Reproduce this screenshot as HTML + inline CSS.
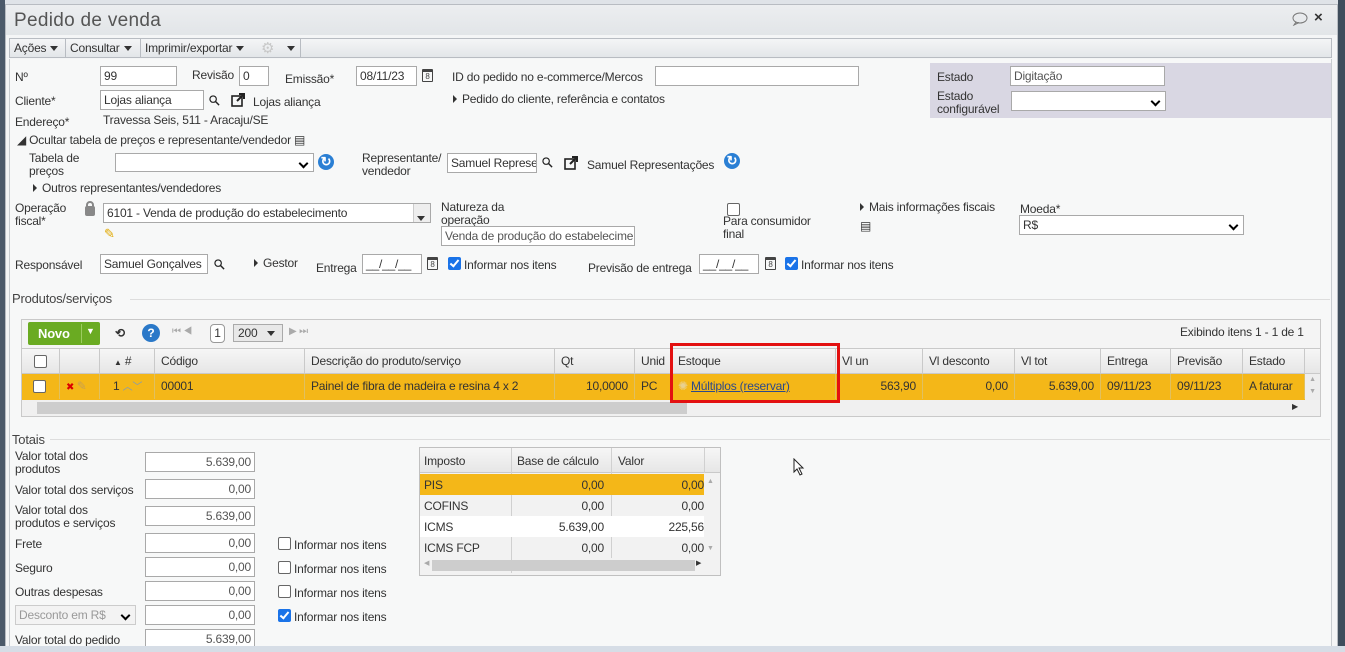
<!DOCTYPE html>
<html><head><meta charset="utf-8"><style>
*{box-sizing:border-box;margin:0;padding:0}
body{width:1345px;height:652px;overflow:hidden;background:#dfe3e8;font-family:"Liberation Sans",sans-serif;font-size:12px;color:#333;position:relative;letter-spacing:-0.2px}
.a{position:absolute;white-space:nowrap}
.in{position:absolute;background:#fff;border:1px solid #a9a9a9;height:20px;padding:2px 3px;font-size:12px;white-space:nowrap;overflow:hidden}
.r{text-align:right;color:#555}
.sel::after{content:"";position:absolute;right:6px;top:6px;width:5px;height:5px;border-right:2px solid #000;border-bottom:2px solid #000;transform:rotate(45deg)}
.cb{position:absolute;width:13px;height:13px;border:1px solid #666;border-radius:2px;background:#fff}
.cbk{position:absolute;width:13px;height:13px;border-radius:2px;background:#1a73e8}
.cbk::after{content:"";position:absolute;left:4px;top:1px;width:3px;height:7px;border-right:2px solid #fff;border-bottom:2px solid #fff;transform:rotate(40deg)}
.tri{display:inline-block;width:0;height:0;border-top:4px solid transparent;border-bottom:4px solid transparent;border-left:4px solid #333;margin-right:5px;vertical-align:0}
.dn{display:inline-block;width:0;height:0;border-left:4px solid transparent;border-right:4px solid transparent;border-top:5px solid #333;margin-left:4px;vertical-align:1px}
.th{position:absolute;top:0;height:25px;line-height:25px;padding-left:6px;border-right:1px solid #c9c9c9;color:#333}
.td{position:absolute;top:0;height:25px;line-height:25px;padding:0 6px;border-right:1px solid #e0c060}
.cal{position:absolute;width:11px;height:13px;border:1px solid #444;border-top-width:3px;border-radius:1px;font-size:8px;line-height:9px;text-align:center;color:#444}
.ref{position:absolute;width:16px;height:16px;border-radius:8px;background:#2a7fd4;color:#fff;font-weight:bold;font-size:13px;line-height:16px;text-align:center}
</style></head><body>
<svg width="0" height="0" style="position:absolute"><defs><symbol id="mg" viewBox="0 0 12 12"><circle cx="4.5" cy="4.5" r="3.5" fill="none" stroke="#222" stroke-width="1.3"/><path d="M7 7 L11 11" stroke="#222" stroke-width="1.6"/></symbol><symbol id="ext" viewBox="0 0 15 15"><rect x="1" y="3" width="10" height="10" fill="none" stroke="#222" stroke-width="1.6"/><path d="M6 8 L13 1 M8 1 H13 V6" stroke="#222" stroke-width="2" fill="none"/></symbol></defs></svg>
<div class="a" style="left:0;top:0;width:5px;height:652px;background:#4c5a6a"></div>
<div class="a" style="left:5px;top:4px;width:1333px;height:648px;background:#f4f5f6;border:1px solid #b8bcc2"></div>
<div class="a" style="left:6px;top:5px;width:1331px;height:30px;background:linear-gradient(#eceef0,#e2e5e8)"></div>
<div class="a" style="left:14px;top:10px;font-size:19px;color:#555;letter-spacing:0.3px">Pedido de venda</div>
<svg class="a" style="left:1291px;top:12px" width="18" height="14"><ellipse cx="9" cy="6" rx="7" ry="5" fill="none" stroke="#777"/><path d="M5 10 L3 13 L8 10.5" fill="none" stroke="#777"/></svg>
<div class="a" style="left:1314px;top:9px;font-size:15px;font-weight:bold;color:#333">×</div>
<div class="a" style="left:1338px;top:0;width:7px;height:652px;background:#3f4d5c"></div>
<div class="a" style="left:9px;top:38px;width:1323px;height:20px;background:linear-gradient(#f4f5f6,#e3e6e9);border:1px solid #b8bcc2"></div>
<div class="a" style="left:14px;top:41px">Ações<span class="dn"></span></div>
<div class="a" style="left:65px;top:38px;width:1px;height:20px;background:#b8bcc2"></div>
<div class="a" style="left:70px;top:41px">Consultar<span class="dn"></span></div>
<div class="a" style="left:140px;top:38px;width:1px;height:20px;background:#b8bcc2"></div>
<div class="a" style="left:145px;top:41px">Imprimir/exportar<span class="dn"></span></div>
<div class="a" style="left:261px;top:39px;font-size:15px;color:#c8c8c8">⚙</div>
<div class="a" style="left:283px;top:41px"><span class="dn"></span></div>
<div class="a" style="left:300px;top:38px;width:1px;height:20px;background:#b8bcc2"></div>
<div class="a" style="left:9px;top:59px;width:1323px;height:592px;background:#f7f8f8;border-left:1px solid #c8ccd0;border-right:1px solid #c8ccd0"></div>
<div class="a" style="left:930px;top:63px;width:401px;height:55px;background:#d9d7e3"></div>
<div class="a" style="left:15px;top:70px">Nº</div>
<div class="in" style="left:100px;top:66px;width:77px">99</div>
<div class="a" style="left:192px;top:68px">Revisão</div>
<div class="in" style="left:239px;top:66px;width:30px">0</div>
<div class="a" style="left:285px;top:72px">Emissão*</div>
<div class="in" style="left:356px;top:66px;width:61px">08/11/23</div>
<div class="cal" style="left:422px;top:69px">8</div>
<div class="a" style="left:452px;top:70px">ID do pedido no e-commerce/Mercos</div>
<div class="in" style="left:655px;top:66px;width:204px"></div>
<div class="a" style="left:937px;top:70px">Estado</div>
<div class="in" style="left:1010px;top:66px;width:155px;color:#555">Digitação</div>
<div class="a" style="left:937px;top:90px;line-height:13px">Estado<br>configurável</div>
<div class="in sel" style="left:1011px;top:91px;width:155px"></div>
<div class="a" style="left:15px;top:94px">Cliente*</div>
<div class="in" style="left:100px;top:90px;width:104px">Lojas aliança</div>
<svg class="a" style="left:209px;top:95px" width="11" height="11"><use href="#mg"/></svg>
<svg class="a" style="left:231px;top:93px" width="15" height="15"><use href="#ext"/></svg>
<div class="a" style="left:253px;top:95px">Lojas aliança</div>
<div class="a" style="left:453px;top:92px"><span class="tri"></span>Pedido do cliente, referência e contatos</div>
<div class="a" style="left:15px;top:115px">Endereço*</div>
<div class="a" style="left:103px;top:113px">Travessa Seis, 511 - Aracaju/SE</div>
<div class="a" style="left:17px;top:133px">◢ Ocultar tabela de preços e representante/vendedor ▤</div>
<div class="a" style="left:29px;top:152px;line-height:13px">Tabela de<br>preços</div>
<div class="in sel" style="left:115px;top:153px;width:199px;height:19px"></div>
<div class="ref" style="left:318px;top:154px">↻</div>
<div class="a" style="left:362px;top:152px;line-height:13px">Representante/<br>vendedor</div>
<div class="in" style="left:447px;top:153px;width:90px">Samuel Represe</div>
<svg class="a" style="left:542px;top:157px" width="11" height="11"><use href="#mg"/></svg>
<svg class="a" style="left:564px;top:156px" width="15" height="15"><use href="#ext"/></svg>
<div class="a" style="left:587px;top:158px">Samuel Representações</div>
<div class="ref" style="left:724px;top:153px">↻</div>
<div class="a" style="left:33px;top:181px"><span class="tri"></span>Outros representantes/vendedores</div>
<div class="a" style="left:15px;top:202px;line-height:13px">Operação<br>fiscal*</div>
<div class="a" style="left:85px;top:206px;width:10px;height:10px;background:#888;border-radius:2px"></div>
<div class="a" style="left:86px;top:201px;width:8px;height:8px;border:2px solid #888;border-radius:4px 4px 0 0"></div>
<div class="in" style="left:103px;top:203px;width:328px">6101 - Venda de produção do estabelecimento</div>
<div class="a" style="left:413px;top:204px;width:17px;height:18px;background:#eee;border-left:1px solid #ccc"></div>
<div class="a" style="left:417px;top:211px"><span class="dn" style="margin:0"></span></div>
<div class="a" style="left:104px;top:226px;color:#e0a800;font-size:13px">✎</div>
<div class="a" style="left:441px;top:201px;line-height:13px">Natureza da<br>operação</div>
<div class="in" style="left:441px;top:226px;width:194px;color:#555">Venda de produção do estabelecime</div>
<div class="cb" style="left:727px;top:203px"></div>
<div class="a" style="left:723px;top:215px;line-height:13px">Para consumidor<br>final</div>
<div class="a" style="left:860px;top:200px"><span class="tri"></span>Mais informações fiscais</div>
<div class="a" style="left:860px;top:219px">▤</div>
<div class="a" style="left:1020px;top:202px">Moeda*</div>
<div class="in sel" style="left:1019px;top:215px;width:225px">R$</div>
<div class="a" style="left:15px;top:258px">Responsável</div>
<div class="in" style="left:100px;top:254px;width:108px">Samuel Gonçalves</div>
<svg class="a" style="left:214px;top:259px" width="11" height="11"><use href="#mg"/></svg>
<div class="a" style="left:254px;top:256px"><span class="tri"></span>Gestor</div>
<div class="a" style="left:316px;top:261px">Entrega</div>
<div class="in" style="left:362px;top:254px;width:60px">__/__/__</div>
<div class="cal" style="left:427px;top:257px">8</div>
<div class="cbk" style="left:448px;top:257px"></div>
<div class="a" style="left:464px;top:258px">Informar nos itens</div>
<div class="a" style="left:588px;top:261px">Previsão de entrega</div>
<div class="in" style="left:699px;top:254px;width:60px">__/__/__</div>
<div class="cal" style="left:765px;top:257px">8</div>
<div class="cbk" style="left:785px;top:257px"></div>
<div class="a" style="left:801px;top:258px">Informar nos itens</div>
<div class="a" style="left:12px;top:291px;font-size:13px;color:#444">Produtos/serviços</div>
<div class="a" style="left:130px;top:299px;width:1200px;height:1px;background:#ddd"></div>
<div class="a" style="left:21px;top:319px;width:1300px;height:98px;border:1px solid #c9c9c9;background:#f4f4f4"></div>
<div class="a" style="left:28px;top:322px;width:72px;height:23px;background:#6aab22;border-radius:2px"></div>
<div class="a" style="left:38px;top:326px;color:#fff;font-weight:bold;font-size:13px">Novo</div>
<div class="a" style="left:81px;top:324px;width:1px;height:19px;background:#9ccc60"></div>
<div class="a" style="left:86px;top:326px;color:#fff;font-size:9px">▼</div>
<div class="a" style="left:115px;top:326px;font-weight:bold">⟲</div>
<div class="a" style="left:142px;top:324px;width:18px;height:18px;border-radius:9px;background:#2a78c8;color:#fff;text-align:center;font-weight:bold;line-height:18px">?</div>
<div class="a" style="left:172px;top:326px;color:#aaa;font-size:10px">⏮ ◀</div>
<div class="a" style="left:210px;top:324px;width:15px;height:19px;border:1px solid #999;border-radius:4px;background:#fff;text-align:center;line-height:17px">1</div>
<div class="a" style="left:233px;top:324px;width:50px;height:18px;border:1px solid #aaa;background:#e8e8e8;padding-left:4px;line-height:16px">200<span class="dn" style="margin-left:10px"></span></div>
<div class="a" style="left:289px;top:326px;color:#aaa;font-size:10px">▶ ⏭</div>
<div class="a" style="left:1180px;top:325px">Exibindo itens 1 - 1 de 1</div>
<div class="a" style="left:22px;top:348px;width:1298px;height:26px;background:linear-gradient(#f6f6f6,#e6e6e6);border-bottom:1px solid #c9c9c9;border-top:1px solid #c9c9c9">
<div class="th" style="left:0;width:38px"></div><div class="cb" style="left:12px;top:6px"></div>
<div class="th" style="left:38px;width:40px"></div>
<div class="th" style="left:78px;width:55px;padding-left:14px"><span style="font-size:8px">▲</span> #</div>
<div class="th" style="left:133px;width:150px">Código</div>
<div class="th" style="left:283px;width:250px">Descrição do produto/serviço</div>
<div class="th" style="left:533px;width:80px">Qt</div>
<div class="th" style="left:613px;width:37px">Unid</div>
<div class="th" style="left:650px;width:164px">Estoque</div>
<div class="th" style="left:814px;width:87px">Vl un</div>
<div class="th" style="left:901px;width:92px">Vl desconto</div>
<div class="th" style="left:993px;width:86px">Vl tot</div>
<div class="th" style="left:1079px;width:70px">Entrega</div>
<div class="th" style="left:1149px;width:72px">Previsão</div>
<div class="th" style="left:1221px;width:62px">Estado</div>
</div>
<div class="a" style="left:22px;top:374px;width:1283px;height:26px;background:#f4b718">
<div class="td" style="left:0;width:38px"></div><div class="cb" style="left:11px;top:6px"></div>
<div class="td" style="left:38px;width:40px;color:#d00;font-size:10px">✖ <span style="color:#c8a050;font-size:12px">✎</span></div>
<div class="td" style="left:78px;width:55px;padding-left:13px">1 <span style="color:#7a9ac0;font-size:10px">︿﹀</span></div>
<div class="td" style="left:133px;width:150px">00001</div>
<div class="td" style="left:283px;width:250px">Painel de fibra de madeira e resina 4 x 2</div>
<div class="td" style="left:533px;width:80px;text-align:right">10,0000</div>
<div class="td" style="left:613px;width:37px">PC</div>
<div class="td" style="left:650px;width:164px"><span style="color:#e8d090">✺</span> <u style="color:#2d4a8a">Múltiplos (reservar)</u></div>
<div class="td" style="left:814px;width:87px;text-align:right">563,90</div>
<div class="td" style="left:901px;width:92px;text-align:right">0,00</div>
<div class="td" style="left:993px;width:86px;text-align:right">5.639,00</div>
<div class="td" style="left:1079px;width:70px">09/11/23</div>
<div class="td" style="left:1149px;width:72px">09/11/23</div>
<div class="td" style="left:1221px;width:62px">A faturar</div>
</div>
<div class="a" style="left:1305px;top:374px;width:15px;height:26px;background:#eee;color:#aaa;font-size:7px;text-align:center;line-height:12px">▲<br>▼</div>
<div class="a" style="left:22px;top:400px;width:1298px;height:16px;background:#f0f0f0"></div>
<div class="a" style="left:37px;top:402px;width:650px;height:12px;background:#cdcdcd"></div>
<div class="a" style="left:1292px;top:402px;font-size:8px">▶</div>
<div class="a" style="left:670px;top:343px;width:170px;height:60px;border:3px solid #e31010"></div>
<div class="a" style="left:12px;top:432px;font-size:13px;color:#444">Totais</div>
<div class="a" style="left:50px;top:439px;width:1280px;height:1px;background:#ddd"></div>
<div class="a" style="left:15px;top:450px;line-height:13px">Valor total dos<br>produtos</div>
<div class="in r" style="left:145px;top:452px;width:110px">5.639,00</div>
<div class="a" style="left:15px;top:483px">Valor total dos serviços</div>
<div class="in r" style="left:145px;top:479px;width:110px">0,00</div>
<div class="a" style="left:15px;top:504px;line-height:13px">Valor total dos<br>produtos e serviços</div>
<div class="in r" style="left:145px;top:506px;width:110px">5.639,00</div>
<div class="a" style="left:15px;top:537px">Frete</div>
<div class="in r" style="left:145px;top:533px;width:110px">0,00</div>
<div class="a" style="left:15px;top:561px">Seguro</div>
<div class="in r" style="left:145px;top:557px;width:110px">0,00</div>
<div class="a" style="left:15px;top:585px">Outras despesas</div>
<div class="in r" style="left:145px;top:581px;width:110px">0,00</div>
<div class="in sel" style="left:15px;top:605px;width:121px;color:#999;background:#f3f3f3;border-color:#ccc">Desconto em R$</div>
<div class="in r" style="left:145px;top:605px;width:110px">0,00</div>
<div class="a" style="left:15px;top:633px">Valor total do pedido</div>
<div class="in r" style="left:145px;top:629px;width:110px">5.639,00</div>
<div class="cb" style="left:278px;top:537px"></div><div class="a" style="left:294px;top:538px">Informar nos itens</div>
<div class="cb" style="left:278px;top:561px"></div><div class="a" style="left:294px;top:562px">Informar nos itens</div>
<div class="cb" style="left:278px;top:585px"></div><div class="a" style="left:294px;top:586px">Informar nos itens</div>
<div class="cbk" style="left:278px;top:609px"></div><div class="a" style="left:294px;top:610px">Informar nos itens</div>
<div class="a" style="left:419px;top:447px;width:302px;height:129px;border:1px solid #c0c0c0;background:#f2f2f2">
<div class="a" style="left:0;top:0;width:300px;height:25px;background:linear-gradient(#f6f6f6,#e6e6e6);border-bottom:1px solid #c9c9c9"></div>
<div class="a" style="left:4px;top:6px">Imposto</div>
<div class="a" style="left:91px;top:0;width:1px;height:125px;background:#d0d0d0"></div>
<div class="a" style="left:97px;top:6px">Base de cálculo</div>
<div class="a" style="left:191px;top:0;width:1px;height:110px;background:#d0d0d0"></div>
<div class="a" style="left:198px;top:6px">Valor</div>
<div class="a" style="left:284px;top:0;width:1px;height:25px;background:#d0d0d0"></div>
<div class="a" style="left:0;top:26px;width:284px;height:21px;background:#f4b718"></div>
<div class="a" style="left:0;top:68px;width:284px;height:21px;background:#fff"></div>
<div class="a" style="left:4px;top:30px">PIS</div><div class="a" style="left:120px;top:30px;width:64px;text-align:right">0,00</div><div class="a" style="left:220px;top:30px;width:64px;text-align:right">0,00</div>
<div class="a" style="left:4px;top:51px">COFINS</div><div class="a" style="left:120px;top:51px;width:64px;text-align:right">0,00</div><div class="a" style="left:220px;top:51px;width:64px;text-align:right">0,00</div>
<div class="a" style="left:4px;top:72px">ICMS</div><div class="a" style="left:120px;top:72px;width:64px;text-align:right">5.639,00</div><div class="a" style="left:220px;top:72px;width:64px;text-align:right">225,56</div>
<div class="a" style="left:4px;top:93px">ICMS FCP</div><div class="a" style="left:120px;top:93px;width:64px;text-align:right">0,00</div><div class="a" style="left:220px;top:93px;width:64px;text-align:right">0,00</div>
<div class="a" style="left:287px;top:30px;font-size:7px;color:#aaa">▲</div>
<div class="a" style="left:287px;top:97px;font-size:7px;color:#aaa">▼</div>
<div class="a" style="left:12px;top:112px;width:263px;height:11px;background:#cdcdcd"></div>
<div class="a" style="left:4px;top:111px;font-size:7px;color:#aaa">◀</div>
<div class="a" style="left:276px;top:111px;font-size:7px">▶</div>
</div>
<svg class="a" style="left:793px;top:458px" width="12" height="18"><path d="M1 1 L1 14 L4 11 L7 17 L9 16 L6 10 L10 10 Z" fill="#fff" stroke="#222"/></svg>
<div class="a" style="left:0;top:646px;width:1345px;height:6px;background:#d6dde6"></div>
</body></html>
